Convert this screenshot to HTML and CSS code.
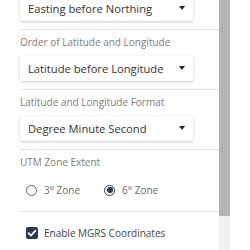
FILE: index.html
```html
<!DOCTYPE html>
<html lang="en">
<head>
    <meta charset="UTF-8">
    <meta name="viewport" content="width=device-width, initial-scale=1.0">
    <title>Coordinate Settings</title>
    <link rel="stylesheet" href="styles.css">
</head>
<body>

    <div class="frame">
        <div class="panel">

            <div class="section first">
                <div class="select">
                    <span>Easting before Northing</span>
                    <span class="caret"></span>
                </div>
            </div>

            <div class="section">
                <div class="label">Order of Latitude and Longitude</div>
                <div class="select">
                    <span>Latitude before Longitude</span>
                    <span class="caret"></span>
                </div>
            </div>

            <div class="section">
                <div class="label">Latitude and Longitude Format</div>
                <div class="select">
                    <span>Degree Minute Second</span>
                    <span class="caret"></span>
                </div>
            </div>

            <div class="section">
                <div class="label">UTM Zone Extent</div>
                <div class="radio-row">
                    <label class="radio"><span class="dot"></span>3° Zone</label>
                    <label class="radio checked"><span class="dot"></span>6° Zone</label>
                </div>
            </div>

            <div class="section check-section">
                <label class="check">
                    <span class="box">
                        <svg width="12" height="12" viewBox="0 0 12 12">
                            <path d="M2.6 6.2 L5 8.5 L9.5 3.6" fill="none" stroke="#fff" stroke-width="1.8" stroke-linecap="round" stroke-linejoin="round"/>
                        </svg>
                    </span>
                    Enable MGRS Coordinates
                </label>
            </div>

        </div>

        <div class="scrollbar">
            <div class="thumb"></div>
        </div>
    </div>

</body>
</html>
```

FILE: styles.css
```css
body {
    margin: 0;
    padding: 0;
    background-color: #fff;
    font-family: "Open Sans", "Liberation Sans", sans-serif;
}

.frame {
    display: flex;
    height: 250px;
    padding-left: 20px;
    overflow: hidden;
}

.panel {
    width: 199px;
}

.section {
    border-top: 1px solid #e6e6e6;
    padding: 5px 0 8px;
}

.section.first {
    border-top: none;
    padding-top: 0;
    margin-top: -4px;
}

.label {
    font-size: 10px;
    line-height: 14px;
    color: #7d7d7d;
    margin-bottom: 7px;
}

.select {
    display: flex;
    align-items: center;
    justify-content: space-between;
    width: 173px;
    height: 25px;
    box-sizing: border-box;
    padding: 0 8px;
    background-color: #fff;
    border-radius: 2px;
    box-shadow: 0 1px 3px rgba(0, 0, 0, 0.22);
    font-size: 11.2px;
    color: #333;
}

.caret {
    width: 0;
    height: 0;
    border-left: 3.5px solid transparent;
    border-right: 3.5px solid transparent;
    border-top: 4px solid #222;
    margin-top: -2px;
}

.radio-row {
    display: flex;
    gap: 24px;
    height: 18px;
    align-items: center;
    margin-top: 12px;
    padding: 0 0 4px 6px;
}

.radio {
    display: flex;
    align-items: center;
    font-size: 10px;
    color: #6a6a6a;
}

.radio .dot {
    width: 9px;
    height: 9px;
    border: 1.5px solid #666;
    border-radius: 50%;
    margin-right: 7px;
    position: relative;
}

.radio.checked .dot {
    border-color: #2b3a4e;
}

.radio.checked .dot::after {
    content: "";
    position: absolute;
    left: 1.5px;
    top: 1.5px;
    width: 6px;
    height: 6px;
    border-radius: 50%;
    background-color: #2b3a4e;
}

.check-section {
    padding-top: 14px;
}

.check {
    display: flex;
    align-items: center;
    padding-left: 6px;
    font-size: 10px;
    color: #444;
}

.check .box {
    width: 12px;
    height: 12px;
    border-radius: 2px;
    background-color: #2b3a4e;
    margin-right: 6px;
    display: flex;
}

.scrollbar {
    width: 11px;
    background-color: #f1f1f1;
}

.thumb {
    height: 216px;
    background-color: #b4b4b4;
}
```
